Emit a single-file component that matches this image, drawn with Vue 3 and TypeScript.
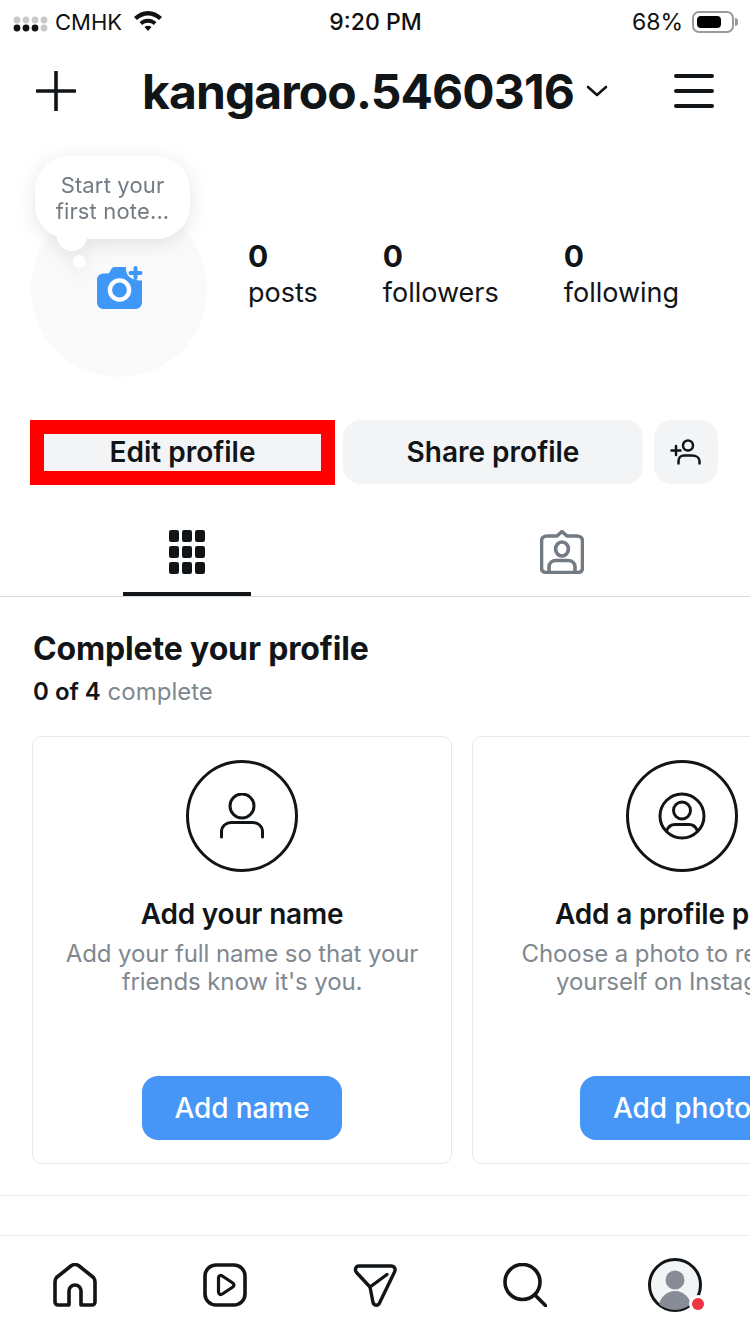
<template>
  <div class="page">
    <div class="status">
      <div class="statusLeft">
        <svg class="signal" width="36" height="16" viewBox="0 0 36 16">
          <circle v-for="d in signalDots" :key="d.key" :cx="d.x" :cy="d.y" r="3.4" :fill="d.on ? '#111' : '#c9c9c9'" />
        </svg>
        <span>CMHK</span>
        <svg width="30" height="22" viewBox="0 0 30 22" class="wifi">
          <path d="M1 8 C9 0 21 0 29 8 L26 11 C19.5 5 10.5 5 4 11 Z" fill="#111" />
          <path d="M6.5 13 C11.5 8.5 18.5 8.5 23.5 13 L20.8 16 C17.5 13 12.5 13 9.2 16 Z" fill="#111" />
          <path d="M11.5 18 C13.5 16.4 16.5 16.4 18.5 18 L15 22 Z" fill="#111" />
        </svg>
      </div>
      <div class="statusTime">9:20 PM</div>
      <div class="statusRight">
        <span>68%</span>
        <div class="battery"><div class="batteryFill"></div></div>
        <div class="batteryCap"></div>
      </div>
    </div>

    <header class="header">
      <svg width="40" height="40" viewBox="0 0 40 40">
        <path d="M20 1V39M1 20H39" stroke="#111518" stroke-width="3.6" stroke-linecap="round" />
      </svg>
      <div class="account">
        <span class="username">kangaroo.5460316</span>
        <svg width="22" height="12" viewBox="0 0 22 12">
          <path d="M2 2L11 10L20 2" fill="none" stroke="#111518" stroke-width="2.6" stroke-linecap="round" stroke-linejoin="round" />
        </svg>
      </div>
      <div class="menu"><i></i><i></i><i></i></div>
    </header>

    <section class="profile">
      <div class="avatar">
        <svg class="camera" width="46" height="44" viewBox="0 0 46 44">
          <path d="M14 3.5 C15 1.5 16.5 1 18.5 1 H29 C28 9 34 15 45 14.5 V36 C45 40.5 42 43 38 43 H7 C3 43 0 40.5 0 36 V14 C0 10 3 7.5 7 7.5 H10.5 C12 7.5 13 6 14 3.5 Z" fill="#3f97f8" />
          <circle cx="22.5" cy="24" r="9.6" fill="none" stroke="#fff" stroke-width="4.4" />
          <path d="M38.5 2V12M33.5 7H43.5" stroke="#3f97f8" stroke-width="4" stroke-linecap="round" />
        </svg>
      </div>
      <div class="note">
        <div class="bubble">Start your<br />first note...</div>
        <div class="bubbleTail"></div>
        <div class="bubbleDot"></div>
      </div>
      <div class="stats">
        <div v-for="s in stats" :key="s.label" class="stat">
          <b>{{ s.value }}</b>
          <span>{{ s.label }}</span>
        </div>
      </div>
    </section>

    <div class="actions">
      <button class="btn editBtn">Edit profile</button>
      <button class="btn shareBtn">Share profile</button>
      <button class="btn addBtn">
        <svg width="32" height="26" viewBox="0 0 32 26">
          <path d="M6 7V16M1.5 11.5H10.5" stroke="#111518" stroke-width="2.5" stroke-linecap="round" />
          <circle cx="18" cy="6.5" r="5" fill="none" stroke="#111518" stroke-width="2.5" />
          <path d="M8.5 24.5V22C8.5 18.5 11 16.5 14 16.5H22C26 16.5 29.5 18.5 29.5 22V24.5" fill="none" stroke="#111518" stroke-width="2.5" stroke-linecap="round" />
        </svg>
      </button>
    </div>

    <div class="tabs">
      <div class="tab active">
        <svg width="38" height="44" viewBox="0 0 38 44">
          <rect v-for="c in gridCells" :key="c.key" :x="c.x" :y="c.y" width="10" height="12" rx="2.2" fill="#111518" />
        </svg>
      </div>
      <div class="tab tagTab">
        <svg width="44" height="44" viewBox="0 0 44 44">
          <path d="M7 6H17L22 1.5L27 6H37C40 6 42.5 8 42.5 11V38C42.5 41 40.5 42.5 37.5 42.5H6.5C3.5 42.5 1.5 41 1.5 38V11C1.5 8 4 6 7 6Z" fill="none" stroke="#737a82" stroke-width="3.6" stroke-linejoin="round" />
          <ellipse cx="22" cy="19" rx="6.4" ry="7" fill="none" stroke="#737a82" stroke-width="3.6" />
          <path d="M9 42V37C9 33 12 30.5 16 30.5H28C32 30.5 35 33 35 37V42" fill="none" stroke="#737a82" stroke-width="3.6" />
        </svg>
      </div>
    </div>

    <section class="complete">
      <h2>Complete your profile</h2>
      <p class="progress"><b>0 of 4</b> <span>complete</span></p>
      <div class="cards">
        <div v-for="card in cards" :key="card.title" class="card">
          <div class="iconCircle">
            <svg v-if="card.icon === 'name'" width="46" height="46" viewBox="0 0 46 46">
              <circle cx="23" cy="13" r="12" fill="none" stroke="#111518" stroke-width="3" />
              <path d="M2.5 44V39C2.5 33 7 29.5 12.5 29.5H33.5C39 29.5 43.5 33 43.5 39V44" fill="none" stroke="#111518" stroke-width="3" stroke-linecap="round" />
            </svg>
            <svg v-else width="48" height="48" viewBox="0 0 48 48">
              <circle cx="24" cy="24" r="22" fill="none" stroke="#111518" stroke-width="3" />
              <circle cx="24" cy="18.5" r="8.5" fill="none" stroke="#111518" stroke-width="3" />
              <path d="M8.5 39C10 35 13 32.5 17 32.5H31C35 32.5 38 35 39.5 39" fill="none" stroke="#111518" stroke-width="3" />
            </svg>
          </div>
          <h3>{{ card.title }}</h3>
          <p class="cardText">{{ card.line1 }}<br />{{ card.line2 }}</p>
          <button class="cardBtn">{{ card.action }}</button>
        </div>
      </div>
    </section>

    <div class="spacer"></div>

    <nav class="nav">
      <svg width="44" height="44" viewBox="0 0 44 44">
        <path d="M16 42H5A3 3 0 0 1 2 39V19Q2 16.5 3.5 14.5L18.5 2.5Q22 0.5 25.5 2.5L40.5 14.5Q42 16.5 42 19V39A3 3 0 0 1 39 42H28V28A6 6 0 0 0 16 28Z" fill="none" stroke="#111518" stroke-width="3.6" stroke-linejoin="round" />
      </svg>
      <svg width="44" height="44" viewBox="0 0 44 44">
        <rect x="2" y="2" width="40" height="40" rx="11" fill="none" stroke="#111518" stroke-width="3.6" />
        <path d="M15.5 15C15.5 12.8 17.5 11.8 19.3 13L29.8 20C31.3 21 31.3 23 29.8 24L19.3 31C17.5 32.2 15.5 31.2 15.5 29Z" fill="none" stroke="#111518" stroke-width="3.2" stroke-linejoin="round" />
      </svg>
      <svg width="44" height="44" viewBox="0 0 44 44">
        <path d="M6 3H38C41.5 3 43 6 41.5 9L26.5 40C25 43 21 43 20 39.5L17 24L3.5 9.5C1.5 7 2.5 3 6 3Z" fill="none" stroke="#111518" stroke-width="3.4" stroke-linejoin="round" />
        <path d="M17 24L34 11.5" stroke="#111518" stroke-width="3.4" stroke-linecap="round" />
      </svg>
      <svg width="44" height="44" viewBox="0 0 44 44">
        <circle cx="19.5" cy="19" r="17.5" fill="none" stroke="#111518" stroke-width="3.6" />
        <path d="M32 32L43 43" stroke="#111518" stroke-width="3.6" stroke-linecap="round" />
      </svg>
      <svg class="navAvatar" width="54" height="54" viewBox="0 0 54 54">
        <defs>
          <clipPath id="avatarClip"><circle cx="27" cy="27" r="25" /></clipPath>
        </defs>
        <circle cx="27" cy="27" r="25.5" fill="#f3f4f6" stroke="#111518" stroke-width="3" />
        <g clip-path="url(#avatarClip)">
          <circle cx="27" cy="22" r="9.5" fill="#888c96" />
          <circle cx="27" cy="49" r="16" fill="#888c96" />
        </g>
        <circle cx="50" cy="46" r="9" fill="#fff" />
        <circle cx="50" cy="46" r="6" fill="#ef3340" />
      </svg>
    </nav>
  </div>
</template>

<script setup lang="ts">
interface Card {
  icon: string;
  title: string;
  line1: string;
  line2: string;
  action: string;
}

const signalDots = [0, 1, 2, 3].flatMap((i) => [
  { key: `t${i}`, x: 4 + i * 9, y: 4, on: false },
  { key: `b${i}`, x: 4 + i * 9, y: 12, on: i < 3 },
]);

const gridCells = [0, 1, 2].flatMap((r) =>
  [0, 1, 2].map((c) => ({ key: `${r}-${c}`, x: c * 13, y: r * 16 })),
);

const stats = [
  { value: '0', label: 'posts' },
  { value: '0', label: 'followers' },
  { value: '0', label: 'following' },
];

const cards: Card[] = [
  {
    icon: 'name',
    title: 'Add your name',
    line1: 'Add your full name so that your',
    line2: "friends know it's you.",
    action: 'Add name',
  },
  {
    icon: 'photo',
    title: 'Add a profile photo',
    line1: 'Choose a photo to represent',
    line2: 'yourself on Instagram.',
    action: 'Add photo',
  },
];
</script>

<style>
html,
body {
  margin: 0;
  background: #fff;
}
</style>

<style scoped>
.page {
  width: 750px;
  height: 1334px;
  overflow: hidden;
  display: flex;
  flex-direction: column;
  background: #fff;
  color: #111518;
  font-family: Inter, "Liberation Sans", sans-serif;
}

.status {
  height: 44px;
  display: grid;
  grid-template-columns: 1fr auto 1fr;
  align-items: center;
  padding: 0 12px 0 13px;
  font-size: 22px;
  color: #111;
}

.statusLeft {
  display: flex;
  align-items: center;
  gap: 6px;
}

.signal {
  margin-top: 3px;
}

.wifi {
  margin-left: 5px;
  margin-bottom: 4px;
}

.statusTime {
  font-size: 23px;
  font-weight: 500;
}

.statusRight {
  display: flex;
  align-items: center;
  justify-content: flex-end;
  font-size: 23px;
}

.battery {
  width: 42px;
  height: 22px;
  box-sizing: border-box;
  margin-left: 9px;
  padding: 3px;
  border: 2px solid #9a9a9a;
  border-radius: 7px;
}

.batteryFill {
  width: 24px;
  height: 100%;
  background: #000;
  border-radius: 4px;
}

.batteryCap {
  width: 3px;
  height: 8px;
  margin-left: 1px;
  background: #9a9a9a;
  border-radius: 0 3px 3px 0;
}

.header {
  height: 96px;
  box-sizing: border-box;
  padding: 0 36px 2px;
  display: flex;
  align-items: center;
  justify-content: space-between;
}

.account {
  display: flex;
  align-items: center;
  gap: 12px;
}

.username {
  font-size: 48px;
  font-weight: 700;
  letter-spacing: -0.9px;
}

.menu {
  width: 40px;
  display: flex;
  flex-direction: column;
  gap: 11px;
}

.menu i {
  height: 4px;
  background: #111518;
  border-radius: 2px;
}

.profile {
  position: relative;
  display: flex;
  align-items: flex-start;
  height: 280px;
  padding: 61px 0 0 31px;
  box-sizing: border-box;
}

.avatar {
  width: 176px;
  height: 176px;
  flex: none;
  border-radius: 50%;
  background: #fafafa;
  display: flex;
  align-items: center;
  justify-content: center;
}

.camera {
  margin-top: -2px;
  margin-left: 1px;
}

.note {
  position: absolute;
  left: 35px;
  top: 16px;
  width: 155px;
  height: 112px;
  filter: drop-shadow(0 4px 10px rgba(0, 0, 0, 0.1));
}

.bubble {
  position: relative;
  height: 83px;
  box-sizing: border-box;
  padding-top: 16px;
  border-radius: 34px;
  background: #fff;
  color: #737a82;
  font-size: 22px;
  letter-spacing: 0.15px;
  line-height: 26px;
  text-align: center;
}

.bubbleTail {
  position: absolute;
  left: 22px;
  top: 66px;
  width: 30px;
  height: 29px;
  border-radius: 50%;
  background: #fff;
}

.bubbleDot {
  position: absolute;
  left: 38px;
  top: 99px;
  width: 13px;
  height: 13px;
  border-radius: 50%;
  background: #fff;
}

.stats {
  display: flex;
  gap: 65px;
  margin-left: 41px;
  margin-top: 37px;
}

.stat {
  display: flex;
  flex-direction: column;
  gap: 2px;
  font-size: 27px;
}

.stat b {
  font-size: 30px;
  font-weight: 700;
  line-height: 36px;
}

.stat span {
  line-height: 34px;
}

.actions {
  display: flex;
  align-items: flex-start;
  padding-left: 30px;
}

.btn {
  height: 64px;
  border: 0;
  padding: 0;
  background: #f3f4f6;
  color: #111518;
  font-family: inherit;
  font-size: 28px;
  font-weight: 600;
  display: flex;
  align-items: center;
  justify-content: center;
}

.editBtn {
  width: 305px;
  height: 65px;
  box-sizing: border-box;
  padding-bottom: 1px;
  border: solid #ff0000;
  border-width: 14px;
}

.shareBtn {
  width: 300px;
  margin-left: 8px;
  border-radius: 18px;
}

.addBtn {
  width: 64px;
  margin-left: 11px;
  border-radius: 18px;
}

.tabs {
  height: 113px;
  margin-top: -1px;
  box-sizing: border-box;
  display: flex;
  border-bottom: 1px solid #d9d9d9;
}

.tab {
  position: relative;
  width: 50%;
  display: flex;
  align-items: flex-end;
  justify-content: center;
  padding-bottom: 22px;
  box-sizing: border-box;
}

.tagTab {
  padding-right: 2px;
}

.active::after {
  content: "";
  position: absolute;
  left: 123px;
  bottom: 0;
  width: 128px;
  height: 4px;
  background: #111518;
}

.complete {
  height: 599px;
  box-sizing: border-box;
  padding: 32px 0 0 32px;
  border-bottom: 1px solid #ececec;
}

.complete h2 {
  margin: 0;
  padding-left: 1px;
  font-size: 32px;
  letter-spacing: -0.15px;
  line-height: 40px;
  font-weight: 700;
}

.progress {
  margin: 9px 0 0;
  padding-left: 1px;
  font-size: 24px;
  line-height: 28px;
}

.progress b {
  font-weight: 600;
}

.progress span {
  color: #808890;
}

.cards {
  display: flex;
  gap: 20px;
  margin-top: 30px;
}

.card {
  width: 420px;
  height: 428px;
  flex: none;
  box-sizing: border-box;
  padding-top: 23px;
  border: 1px solid #e8e8e8;
  border-radius: 10px;
  display: flex;
  flex-direction: column;
  align-items: center;
}

.iconCircle {
  width: 112px;
  height: 112px;
  box-sizing: border-box;
  border: 3px solid #111518;
  border-radius: 50%;
  display: flex;
  align-items: center;
  justify-content: center;
}

.card h3 {
  margin: 25px 0 0;
  font-size: 28px;
  letter-spacing: -0.2px;
  line-height: 34px;
  font-weight: 600;
  white-space: nowrap;
}

.cardText {
  margin: 9px 0 0;
  color: #808890;
  font-size: 24px;
  letter-spacing: -0.1px;
  line-height: 28px;
  text-align: center;
  white-space: nowrap;
}

.cardBtn {
  height: 64px;
  padding: 0 33px;
  margin-top: auto;
  margin-bottom: 23px;
  border: 0;
  border-radius: 16px;
  background: #4596f6;
  color: #fff;
  font-family: inherit;
  font-size: 28px;
  font-weight: 500;
  letter-spacing: -0.1px;
  white-space: nowrap;
}

.spacer {
  height: 39px;
  flex: none;
}

.nav {
  flex: 1;
  border-top: 1px solid #ececec;
  display: grid;
  grid-template-columns: repeat(5, 150px);
  align-items: center;
  justify-items: center;
}

.navAvatar {
  overflow: visible;
}
</style>
